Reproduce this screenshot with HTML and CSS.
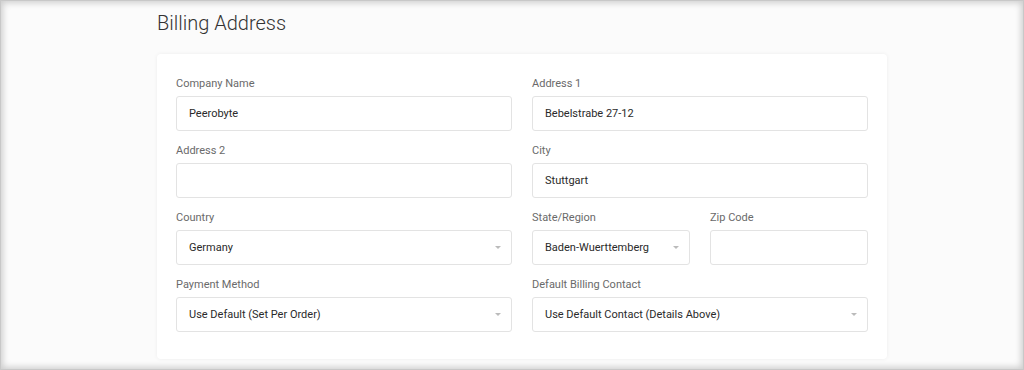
FILE: index.html
```html
<!DOCTYPE html>
<html>
<head>
<meta charset="utf-8">
<link rel="stylesheet" href="styles.css">
</head>
<body>
<div class="frame">
  <div class="content">
    <h1 class="title">Billing Address</h1>
    <div class="card">
      <div class="grid">
        <div class="field">
          <label class="label">Company Name</label>
          <div class="input">Peerobyte</div>
        </div>
        <div class="field">
          <label class="label">Address 1</label>
          <div class="input">Bebelstrabe 27-12</div>
        </div>
        <div class="field">
          <label class="label">Address 2</label>
          <div class="input"></div>
        </div>
        <div class="field">
          <label class="label">City</label>
          <div class="input">Stuttgart</div>
        </div>
        <div class="field">
          <label class="label">Country</label>
          <div class="input select">Germany<span class="caret"></span></div>
        </div>
        <div class="split">
          <div class="field">
            <label class="label">State/Region</label>
            <div class="input select">Baden-Wuerttemberg<span class="caret"></span></div>
          </div>
          <div class="field">
            <label class="label">Zip Code</label>
            <div class="input"></div>
          </div>
        </div>
        <div class="field">
          <label class="label">Payment Method</label>
          <div class="input select">Use Default (Set Per Order)<span class="caret"></span></div>
        </div>
        <div class="field">
          <label class="label">Default Billing Contact</label>
          <div class="input select">Use Default Contact (Details Above)<span class="caret"></span></div>
        </div>
      </div>
    </div>
  </div>
</div>
</body>
</html>
```

FILE: styles.css
```css
html, body {
  margin: 0;
  padding: 0;
}
body {
  font-family: Roboto, "Liberation Sans", sans-serif;
  background: #ffffff;
}
.frame {
  width: 1024px;
  height: 370px;
  box-sizing: border-box;
  background: #fbfbfb;
  box-shadow: inset 0 0 0 1px #c8c8c8, inset 0 0 6px 3px rgba(0,0,0,0.18);
  overflow: hidden;
  padding: 10px 0 0 157px;
}
.content {
  width: 730px;
}
.title {
  margin: 0;
  font-size: 20px;
  font-weight: 300;
  color: #333;
  line-height: 26px;
  height: 44px;
}
.card {
  background: #fff;
  border-radius: 4px;
  box-shadow: 0 0 4px rgba(0,0,0,0.06);
  padding: 21px 19px 27px;
}
.grid {
  display: grid;
  grid-template-columns: 336px 336px;
  column-gap: 20px;
  row-gap: 11px;
}
.split {
  display: grid;
  grid-template-columns: 158px 158px;
  column-gap: 20px;
}
.field {
  display: flex;
  flex-direction: column;
}
.label {
  font-size: 11px;
  color: #6a6a6a;
  line-height: 16px;
  height: 16px;
  padding-top: 1px;
  margin-bottom: 4px;
}
.input {
  position: relative;
  height: 35px;
  box-sizing: border-box;
  border: 1px solid #e3e3e3;
  border-radius: 3px;
  background: #fff;
  padding: 0 12px;
  font-size: 11px;
  line-height: 33px;
  color: #2a2a2a;
}
.caret {
  position: absolute;
  right: 10px;
  top: 15px;
  width: 0;
  height: 0;
  border-left: 3px solid transparent;
  border-right: 3px solid transparent;
  border-top: 3px solid #bbb;
}
```
